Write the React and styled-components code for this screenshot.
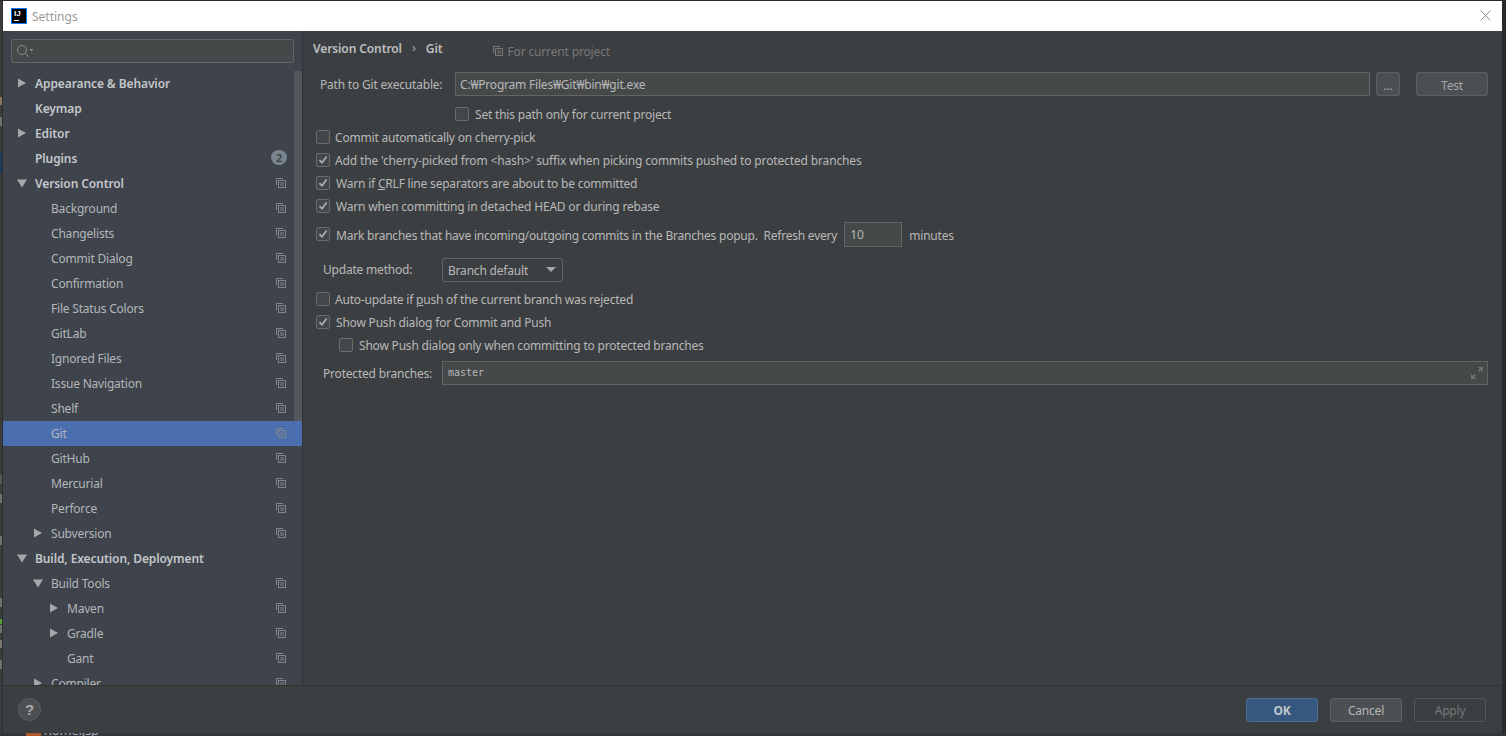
import React from 'react';
import styled, { createGlobalStyle } from 'styled-components';

const Global = createGlobalStyle`
  html, body { margin: 0; padding: 0; background: #2b2b2b; }
  * { box-sizing: border-box; }
`;
const FONT = `"Noto Sans", "Open Sans", sans-serif`;

const Screen = styled.div`
  width: 1506px; height: 736px; overflow: hidden; background: #2b2b2b;
  padding-top: 1px; display: flex; flex-direction: column;
  font-family: ${FONT}; font-size: 12px; letter-spacing: -0.2px; color: #b8b8b8;
`;
const Middle = styled.div` flex: 1; min-height: 0; display: flex; padding-right: 4px; `;
const LeftStrip = styled.div`
  width: 3px; flex: none; background: #3a3c3e; border-right: 1px solid #2e2e2e; display: flex; flex-direction: column;
`;
const StripMark = styled.div`
  height: ${p => p.$h}px; margin-top: ${p => p.$mt}px; background: ${p => p.$c}; flex: none;
`;
const BottomStrip = styled.div`
  height: 3px; flex: none; overflow: hidden; background: #333536; display: flex; align-items: flex-start; padding-left: 26px;
`;
const FileIcon = styled.div` width: 15px; height: 3px; background: #b5552a; flex: none; `;
const FileName = styled.div` margin: -12px 0 0 3px; color: #a9b7c6; font-size: 13px; line-height: 18px; `;
const Win = styled.div`
  flex: 1; min-width: 0; display: flex; flex-direction: column; background: #3c3f41;
`;
const TitleBar = styled.div`
  height: 30px; flex: none; background: #fff; display: flex; align-items: center;
  padding: 0 11px 0 8px; color: #999; font-size: 12px; letter-spacing: 0;
`;
const Logo = styled.div`
  width: 16px; height: 16px; background: #000; border: 1px solid #087cfa; color: #fff; margin-top: -1px;
  font: 700 8px/10px "Liberation Sans", sans-serif; padding-left: 2px; margin-right: 5px; position: relative;
  &::after { content: ''; position: absolute; left: 2px; bottom: 2px; width: 5px; height: 1px; background: #fff; }
`;
const TitleText = styled.div` flex: 1; `;
const CloseIcon = styled.svg` margin-top: -2px; `;
const Body = styled.div` flex: 1; min-height: 0; display: flex; `;
const Sidebar = styled.div`
  width: 300px; flex: none; background: #3e434c; border-right: 1px solid #323232;
  display: flex; flex-direction: column; position: relative;
`;
const SearchBox = styled.div`
  height: 24px; margin: 8px; flex: none; background: #45494a; border: 1px solid #646464;
  border-radius: 2px; display: flex; align-items: center; padding-left: 4px;
`;
const Tree = styled.div` flex: 1; min-height: 0; overflow: hidden; `;
const Row = styled.div`
  height: 25px; display: flex; align-items: center; padding-left: ${p => 14 + p.$level * 16}px; padding-right: 16px;
  background: ${p => p.$selected ? '#4b6eaf' : 'transparent'};
  color: ${p => p.$bold ? '#c4c7c9' : '#b4b7b9'};
  font-weight: ${p => p.$bold ? 600 : 400};
  letter-spacing: ${p => p.$bold ? '-0.1px' : '-0.2px'};
`;
const ArrowSlot = styled.div` width: 18px; flex: none; display: flex; align-items: center; margin-top: -1px; `;
const Label = styled.div` flex: 1; white-space: nowrap; `;
const Badge = styled.div`
  width: 16px; height: 15px; border-radius: 8px; background: #77838f; color: #3c3f41;
  font-size: 11px; line-height: 15px; text-align: center; margin-right: -1px; margin-top: -2px;
`;
const ScrollThumb = styled.div`
  position: absolute; top: 40px; right: 0; width: 8px; height: 350px; background: #53575e;
`;
const Main = styled.div` flex: 1; min-width: 0; display: flex; flex-direction: column; padding: 0 14px 0 13px; `;
const Crumbs = styled.div` height: 41px; flex: none; display: flex; align-items: flex-start; padding-top: 9px; margin-left: -3px; `;
const Crumb = styled.span` font-weight: 600; color: #bdbfc1; letter-spacing: -0.1px; `;
const Sep = styled.span` margin: 0 10px; color: #aaa; font-size: 13px; line-height: 15px; `;
const ForProject = styled.span`
  display: flex; align-items: center; gap: 4px; color: #787878; margin: 3px 0 0 51px; letter-spacing: -0.15px;
`;
const FormRow = styled.div`
  display: flex; align-items: center; height: ${p => p.$h || 23}px; margin-top: ${p => p.$mt || 0}px;
  padding-left: ${p => p.$pl || 0}px; white-space: nowrap;
`;
const FieldLabel = styled.div` width: ${p => p.$w}px; flex: none; `;
const TextField = styled.div`
  flex: ${p => p.$grow ? 1 : 'none'}; width: ${p => p.$w ? p.$w + 'px' : 'auto'}; height: ${p => p.$h || 24}px;
  background: #45494a; border: 1px solid #646464; display: flex; align-items: center; padding-left: ${p => p.$pad || 5}px;
  margin: 0 ${p => p.$mx || 0}px;
`;
const Mono = styled.span`
  font-family: "DejaVu Sans Mono", monospace; font-size: 10px; letter-spacing: 0; flex: 1; color: #b5b5b5; margin-top: -2px;
`;
const SmallBtn = styled.div`
  width: ${p => p.$w}px; height: 24px; margin-left: ${p => p.$ml}px; flex: none; border: 1px solid #5e6060;
  background: #4c5052; border-radius: 3px; display: flex; align-items: center; justify-content: center;
  color: #a5a7a9; padding-top: 2px;
`;
const Box = styled.div`
  width: 14px; height: 14px; flex: none; border: 1px solid #6b6b6b; border-radius: 2px;
  background: #43474a; margin: -1px ${p => p.$gap || 6}px 0 0; display: flex; align-items: center; justify-content: center;
`;
const RowText = styled.span`
  padding-top: ${p => p.$pt || 0}px;
  letter-spacing: ${p => p.$ls || -0.2}px;
`;
const Select = styled.div`
  width: 121px; height: 24px; border: 1px solid #646464; border-radius: 3px; background: #3c3f41;
  display: flex; align-items: center; justify-content: space-between; padding: 1px 6px 0 5px;
`;
const Caret = styled.div`
  width: 0; height: 0; border-left: 5px solid transparent; border-right: 5px solid transparent; border-top: 5px solid #a8a8a8; margin-top: -2px;
`;
const Footer = styled.div`
  height: 48px; flex: none; border-top: 1px solid #323232; display: flex; align-items: center;
  padding: 0 16px 0 15px; background: #3c3f41;
`;
const Help = styled.div`
  width: 23px; height: 23px; border-radius: 50%; background: #4c5052; border: 1px solid #5c5f61;
  color: #aaa; font: 700 15px/21px "Liberation Sans", sans-serif; text-align: center; margin-right: auto;
`;
const DlgBtn = styled.div`
  width: 72px; height: 24px; margin-left: 12px; border-radius: 3px; display: flex; align-items: center; justify-content: center;
  padding-top: 1px;
  background: ${p => p.$kind === 'ok' ? '#365880' : p.$kind === 'off' ? 'transparent' : '#4c5052'};
  border: 1px solid ${p => p.$kind === 'ok' ? '#4c708c' : p.$kind === 'off' ? '#53575a' : '#5e6060'};
  color: ${p => p.$kind === 'ok' ? '#c0c6cc' : p.$kind === 'off' ? '#777' : '#b4b6b8'};
  font-weight: ${p => p.$kind === 'ok' ? 700 : 400};
`;
const IconSvg = styled.svg` flex: none; margin-top: -2px; `;

const CopyIcon = ({ color = '#7f868d' }) => (
  <IconSvg width="10" height="10" viewBox="0 0 10 10" fill="none" stroke={color} strokeWidth="1">
    <path d="M0.5 7V0.5H7" />
    <rect x="2.5" y="2.5" width="7" height="7" />
    <path d="M4 5h4M4 7h4" />
  </IconSvg>
);
const RightSvg = styled.svg` margin-left: 1px; `;
const Right = () => <RightSvg width="8" height="10" viewBox="0 0 8 10"><path d="M0 0.5v9l8-4.500z" fill="#a6a8aa" /></RightSvg>;
const Down = () => <svg width="10" height="9" viewBox="0 0 10 9"><path d="M0 0.500h10l-5 8z" fill="#a6a8aa" /></svg>;
const Check = () => <svg width="12" height="12" viewBox="0 0 12 12" fill="none" stroke="#aeb0b2" strokeWidth="1.7"><path d="M2.5 6.2l2.5 2.6 4.6-6.4" /></svg>;
const SearchIcon = () => (
  <svg width="18" height="14" viewBox="0 0 18 14" fill="none" stroke="#8a8d8f" strokeWidth="1">
    <circle cx="6" cy="6" r="4.5" /><path d="M9.500 9.500l3.500 3.500" /><path d="M13.500 5h4l-2 2.400z" fill="#8a8d8f" stroke="none" />
  </svg>
);
const ExpandSvg = styled.svg` margin-right: 4px; `;
const Expand = () => (
  <ExpandSvg width="12" height="12" viewBox="0 0 12 12" fill="#6c7073">
    <path d="M7 0h5v5l-1.800-1.800L8.500 5 7 3.500 8.800 1.800zM0 7l1.800 1.800L3.500 7 5 8.500 3.200 10.200 5 12H0z" />
  </ExpandSvg>
);

const tree = [
  ['Appearance & Behavior', 0, 'r', 1, 0],
  ['Keymap', 0, '', 1, 0],
  ['Editor', 0, 'r', 1, 0],
  ['Plugins', 0, '', 1, 'badge'],
  ['Version Control', 0, 'd', 1, 1],
  ['Background', 1, '', 0, 1],
  ['Changelists', 1, '', 0, 1],
  ['Commit Dialog', 1, '', 0, 1],
  ['Confirmation', 1, '', 0, 1],
  ['File Status Colors', 1, '', 0, 1],
  ['GitLab', 1, '', 0, 1],
  ['Ignored Files', 1, '', 0, 1],
  ['Issue Navigation', 1, '', 0, 1],
  ['Shelf', 1, '', 0, 1],
  ['Git', 1, '', 0, 1],
  ['GitHub', 1, '', 0, 1],
  ['Mercurial', 1, '', 0, 1],
  ['Perforce', 1, '', 0, 1],
  ['Subversion', 1, 'r', 0, 1],
  ['Build, Execution, Deployment', 0, 'd', 1, 0],
  ['Build Tools', 1, 'd', 0, 1],
  ['Maven', 2, 'r', 0, 1],
  ['Gradle', 2, 'r', 0, 1],
  ['Gant', 2, '', 0, 1],
  ['Compiler', 1, 'r', 0, 1],
];

const strip = [
  [96, 8, '#8a7a5a'], [12, 9, '#6d7275'], [26, 21, '#1d3a58'], [302, 9, '#55595c'], [10, 9, '#6d7275'],
  [33, 9, '#6d7275'], [53, 9, '#6d7275'], [12, 5, '#55a03c'], [1, 8, '#6d7275'], [7, 8, '#7a7a70'], [12, 9, '#6d7275'],
];

const Opt = ({ on, mt, pl, h, gap, ls, children }) => (
  <FormRow $mt={mt} $pl={pl} $h={h}>
    <Box $gap={gap}>{on && <Check />}</Box>
    <RowText $ls={ls}>{children}</RowText>
  </FormRow>
);

export default function App() {
  return (
    <Screen>
      <Global />
      <Middle>
        <LeftStrip>
          {strip.map(([mt, h, c], i) => <StripMark key={i} $mt={mt} $h={h} $c={c} />)}
        </LeftStrip>
        <Win>
          <TitleBar>
            <Logo>IJ</Logo>
            <TitleText>Settings</TitleText>
            <CloseIcon width="11" height="11" viewBox="0 0 11 11" stroke="#8a8a8a" strokeWidth="1"><path d="M0.500 0.500l10 10M10.500 0.500l-10 10" /></CloseIcon>
          </TitleBar>
          <Body>
            <Sidebar>
              <SearchBox><SearchIcon /></SearchBox>
              <Tree>
                {tree.map(([name, level, arrow, bold, extra]) => (
                  <Row key={name} $level={level} $bold={!!bold} $selected={name === 'Git'}>
                    <ArrowSlot>{arrow === 'r' && <Right />}{arrow === 'd' && <Down />}</ArrowSlot>
                    <Label>{name}</Label>
                    {extra === 'badge' ? <Badge>2</Badge> : extra ? <CopyIcon /> : null}
                  </Row>
                ))}
              </Tree>
              <ScrollThumb />
            </Sidebar>
            <Main>
              <Crumbs>
                <Crumb>Version Control</Crumb><Sep>›</Sep><Crumb>Git</Crumb>
                <ForProject><CopyIcon color="#7a7a7a" />For current project</ForProject>
              </Crumbs>
              <FormRow $h={24} $pl={4}>
                <FieldLabel $w={135}>Path to Git executable:</FieldLabel>
                <TextField $grow $pad={4}>C:₩Program Files₩Git₩bin₩git.exe</TextField>
                <SmallBtn $w={24} $ml={6}>...</SmallBtn>
                <SmallBtn $w={72} $ml={16}>Test</SmallBtn>
              </FormRow>
              <Opt pl={139} mt={7}>Set this path only for current project</Opt>
              <Opt gap={5}>Commit automatically on cherry-pick</Opt>
              <Opt on gap={5} ls={-0.14}>Add the 'cherry-picked from &lt;hash&gt;' suffix when picking commits pushed to protected branches</Opt>
              <Opt on>Warn if <u>C</u>RLF line separators are about to be committed</Opt>
              <Opt on>Warn when committing in detached HEAD or during rebase</Opt>
              <FormRow $h={25} $mt={4}>
                <Box><Check /></Box>
                <RowText $pt={1} $ls={-0.22}>Mark branches that have incoming/outgoing commits in the Branches popup.&nbsp; Refresh every</RowText>
                <TextField $w={58} $h={25} $mx={7}>10</TextField>
                <RowText $pt={1}>minutes</RowText>
              </FormRow>
              <FormRow $h={25} $mt={10} $pl={7}>
                <FieldLabel $w={119}>Update method:</FieldLabel>
                <Select>Branch default<Caret /></Select>
              </FormRow>
              <Opt mt={6} gap={5}>Auto-update if <u>p</u>ush of the current branch was rejected</Opt>
              <Opt on>Show Push dialog for Commit and Push</Opt>
              <Opt pl={23}>Show Push dialog only when committing to protected branches</Opt>
              <FormRow $h={24} $mt={4} $pl={7}>
                <FieldLabel $w={119}>Protected branches:</FieldLabel>
                <TextField $grow><Mono>master</Mono><Expand /></TextField>
              </FormRow>
            </Main>
          </Body>
          <Footer>
            <Help>?</Help>
            <DlgBtn $kind="ok">OK</DlgBtn>
            <DlgBtn>Cancel</DlgBtn>
            <DlgBtn $kind="off">Apply</DlgBtn>
          </Footer>
        </Win>
      </Middle>
      <BottomStrip>
        <FileIcon />
        <FileName>home.jsp</FileName>
      </BottomStrip>
    </Screen>
  );
}
